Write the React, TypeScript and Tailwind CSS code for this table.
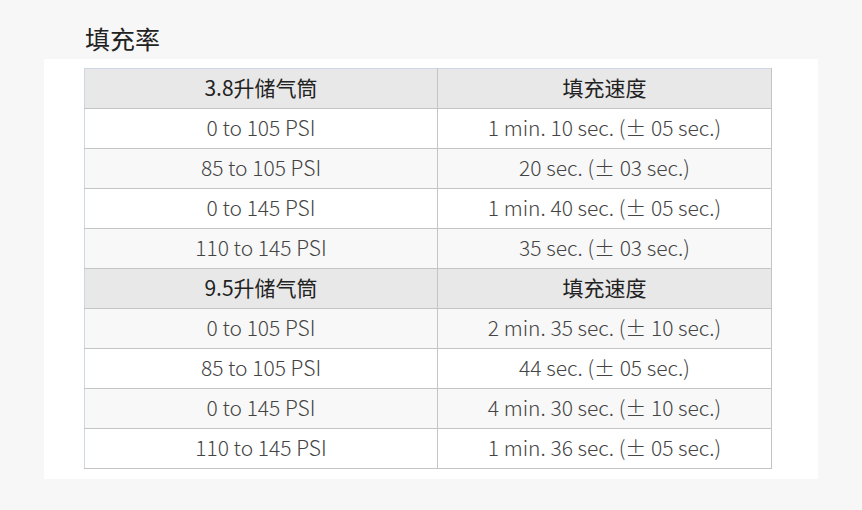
import React from "react";

type Row = { a: string; b: string; head?: boolean; gray?: boolean };

const rows: Row[] = [
  { a: "3.8升储气筒", b: "填充速度", head: true },
  { a: "0 to 105 PSI", b: "1 min. 10 sec. (± 05 sec.)" },
  { a: "85 to 105 PSI", b: "20 sec. (± 03 sec.)", gray: true },
  { a: "0 to 145 PSI", b: "1 min. 40 sec. (± 05 sec.)" },
  { a: "110 to 145 PSI", b: "35 sec. (± 03 sec.)", gray: true },
  { a: "9.5升储气筒", b: "填充速度", head: true },
  { a: "0 to 105 PSI", b: "2 min. 35 sec. (± 10 sec.)", gray: true },
  { a: "85 to 105 PSI", b: "44 sec. (± 05 sec.)" },
  { a: "0 to 145 PSI", b: "4 min. 30 sec. (± 10 sec.)", gray: true },
  { a: "110 to 145 PSI", b: "1 min. 36 sec. (± 05 sec.)" },
];

const lightFont = {
  fontFamily:
    '"Noto Sans CJK SC Light", "Noto Sans CJK SC DemiLight", "Noto Sans CJK SC", sans-serif',
};

export default function App() {
  return (
    <div
      className="w-[862px] h-[510px] bg-[#f7f7f7] pt-[22px]"
      style={{ fontFamily: '"Noto Sans CJK SC", "Noto Sans", sans-serif' }}
    >
      <div className="ml-[85px] text-[25px] leading-[32px] text-[#222] mb-[5px]">填充率</div>
      <div className="ml-[44px] w-[774px] h-[420px] bg-white pt-[9px] pl-[40px]">
        <table className="border-collapse w-[687px] table-fixed border-t border-l border-t-[#cfd6e6] border-l-[#cfd6e6]">
          <colgroup>
            <col className="w-[353px]" />
            <col className="w-[334px]" />
          </colgroup>
          <tbody>
            {rows.map((r, i) => (
              <tr
                key={i}
                className={
                  r.head ? "bg-[#e8e8e8]" : r.gray ? "bg-[#f8f8f8]" : "bg-white"
                }
              >
                {[r.a, r.b].map((t, j) => (
                  <td
                    key={j}
                    style={r.head ? undefined : lightFont}
                    className={
                      "h-[40px] p-0 pb-[3px] leading-[28px] text-center border-b border-r border-[#c4c4c4] text-[21px] " +
                      (r.head ? "font-normal text-[#222]" : "font-light text-[#444]")
                    }
                  >
                    {t}
                  </td>
                ))}
              </tr>
            ))}
          </tbody>
        </table>
      </div>
    </div>
  );
}
